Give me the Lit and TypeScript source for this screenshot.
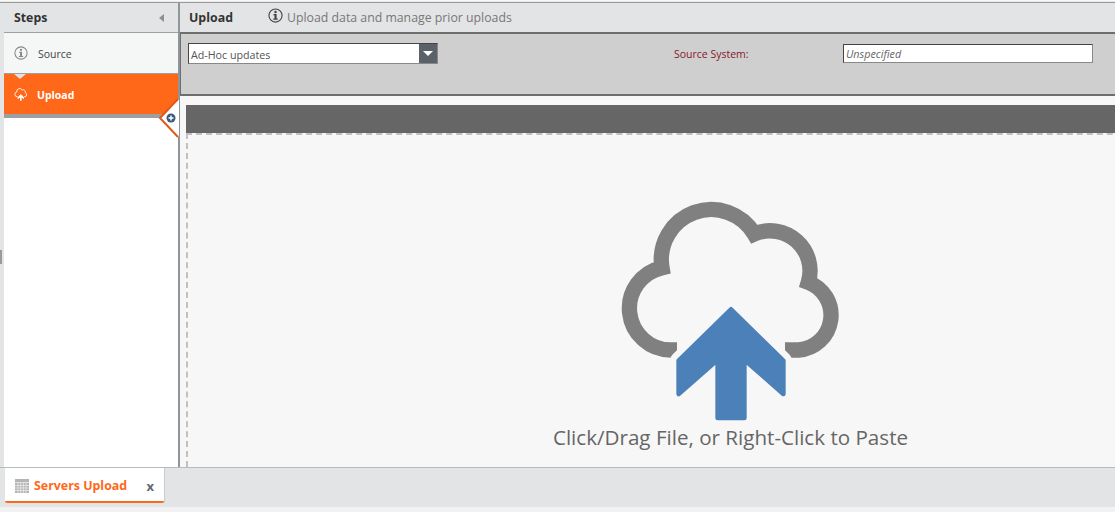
import { LitElement, html, css, svg } from "lit";
import { customElement } from "lit/decorators.js";

const cloudD = "M228 480H210A125 125 0 0 1 183 233A150 150 0 0 1 460 132A120 120 0 0 1 622 277A105 105 0 0 1 593 480H552";
const arrowD = "M390 358L547 512V612L430 509V684H350V509L233 612V512Z";

const infoIcon = (size: number, color: string) => html`<svg class="info" width=${size} height=${size} viewBox="0 0 16 16">
  <circle cx="8" cy="8" r="7" fill="none" stroke=${color} stroke-width="1.2"></circle>
  <circle cx="8" cy="4.3" r="1.3" fill=${color}></circle>
  <path d="M5.8 6.5H9.2V11.3H10.4V12.5H5.6V11.3H6.9V7.7H5.8Z" fill=${color}></path>
</svg>`;

@customElement("app-root")
export class AppRoot extends LitElement {
  static styles = css`
    :host { display: block; width: 1115px; height: 512px; overflow: hidden; background: #f2f2f2; font-family: "Open Sans", "Noto Sans", sans-serif; color: #333; }
    .page { height: 512px; display: flex; flex-direction: column; }
    .topline { height: 3px; flex: none; background: linear-gradient(#fafafa 0 1px, #e8e8e8 1px 2px, #9a9a9a 2px); }
    .body { height: 464px; flex: none; display: flex; background: #e3e4e6; position: relative; }
    .handle { position: absolute; left: 0; top: 247px; width: 2px; height: 14px; background: #9a9a9a; }
    .side { width: 176px; box-sizing: border-box; margin-left: 4px; flex: none; border-right: 2px solid #8f9598; background: #fff; display: flex; flex-direction: column; position: relative; }
    .side-head { height: 29px; flex: none; background: #e3e4e6; border-bottom: 1px solid #9aa0a3; display: flex; align-items: center; justify-content: space-between; padding: 0 14px 0 10px; font-size: 12.3px; font-weight: 700; color: #333; box-sizing: content-box; }
    .collapse { width: 0; height: 0; border-top: 4px solid transparent; border-bottom: 4px solid transparent; border-right: 5px solid #8a9094; }
    .step { height: 40px; flex: none; display: flex; align-items: center; padding-left: 10px; font-size: 10.5px; }
    .step span { margin-top: 2px; }
    .step.source { gap: 10px; background: #f4f7f6; color: #444; border-bottom: 1px solid #9aa0a3; position: relative; z-index: 1; }
    .step.source::after { content: ""; position: absolute; left: 10px; bottom: -6px; width: 0; height: 0; border-left: 6px solid transparent; border-right: 6px solid transparent; border-top: 5px solid #dfe3e3; }
    .step.upload { gap: 9px; background: #ff6719; color: #fff; font-weight: 700; }
    .step.upload svg { display: block; }
    .info { display: block; flex: none; }
    .rule { height: 4px; flex: none; background: #9ba0a3; }
    .flag { position: absolute; right: -1px; top: 94px; display: block; }
    .main { flex: 1; min-width: 0; overflow: hidden; display: flex; flex-direction: column; background: #f7f7f7; }
    .main-head { height: 29px; flex: none; display: flex; align-items: center; background: #e3e4e6; padding-left: 9px; font-size: 12.4px; }
    .main-head b { width: 79px; color: #333; }
    .main-head .info { margin-right: 4px; margin-top: -5px; }
    .desc { font-size: 12.3px; color: #777; }
    .panel { height: 64px; flex: none; box-sizing: border-box; background: #cfcfcf; border: solid #6e6e6e; border-width: 2px 0 2px 1px; display: flex; align-items: flex-start; padding-top: 9px; }
    .select { margin-left: 7px; width: 250px; height: 21px; flex: none; display: flex; background: #fff; border: 1px solid; border-color: #444 #888 #888 #444; box-sizing: border-box; font-size: 10.7px; color: #555; }
    .select span { flex: 1; padding: 3px 0 0 2px; line-height: 16px; }
    .select i { width: 18px; background: #5b6169; display: flex; align-items: center; justify-content: center; }
    .select i::after { content: ""; border-left: 5px solid transparent; border-right: 5px solid transparent; border-top: 5px solid #fff; }
    .label { margin-left: 236px; width: 169px; flex: none; font-size: 10.5px; color: #86182c; line-height: 22px; }
    .input { width: 250px; height: 19px; margin-top: 1px; flex: none; box-sizing: border-box; background: #fff; border: 1px solid; border-color: #444 #888 #888 #444; font-size: 10.8px; font-style: italic; color: #666; padding-left: 2px; line-height: 17px; }
    .content { margin: 9px 0 0 6px; width: 1087px; flex: 1; min-height: 0; display: flex; flex-direction: column; }
    .bar { height: 28px; flex: none; background: #666; }
    .drop { flex: 1; min-height: 0; overflow: hidden; box-sizing: border-box; border: dashed #c6bfc0; border-width: 2px 0 0 2px; display: flex; flex-direction: column; align-items: center; padding-top: 55px; }
    .drop svg { display: block; flex: none; }
    .drop p { margin: 1px 0 0; font-size: 20.6px; line-height: 28px; color: #666; white-space: nowrap; }
    .tabs { height: 40px; flex: none; background: #e3e4e6; border-top: 1px solid #b8bbbd; box-sizing: border-box; padding-left: 5px; }
    .tab { width: 159px; height: 35px; box-sizing: border-box; background: #fff; border-bottom: 2px solid #ff6719; border-radius: 0 0 2px 2px; box-shadow: 1px 0 0 #c9cbcd; display: flex; align-items: center; padding: 2px 10px 0; font-size: 12.4px; font-weight: 700; color: #ff6719; }
    .tab svg { flex: none; margin-right: 5px; display: block; }
    .tab span { flex: 1; }
    .tab em { font-style: normal; color: #5f6870; font-size: 13px; }
  `;

  render() {
    return html`<div class="page">
      <div class="topline"></div>
      <div class="body">
        <div class="handle"></div>
        <aside class="side">
          <div class="side-head"><span>Steps</span><i class="collapse"></i></div>
          <div class="step source">${infoIcon(14, "#888")}<span>Source</span></div>
          <div class="step upload">
            <svg width="14" height="15" viewBox="40 20 720 690">
              <path d=${cloudD} fill="none" stroke="#fff" stroke-width="46"></path>
              <path d=${arrowD} fill="#fff" stroke="#ff6719" stroke-width="40" stroke-linejoin="round"></path>
              <path d=${arrowD} fill="#fff"></path>
            </svg>
            <span>Upload</span>
          </div>
          <div class="rule"></div>
          <svg class="flag" width="22" height="42" viewBox="0 0 22 42">
            <path d="M22 2L3 21L22 40Z" fill="#fff"></path>
            <path d="M21 2L3 21L21 40" fill="none" stroke="#e0591a" stroke-width="2"></path>
            <circle cx="14" cy="21" r="4.5" fill="#3c5a80"></circle>
            <path d="M11.5 21H16.5M14 18.5V23.5" stroke="#fff" stroke-width="1.4"></path>
          </svg>
        </aside>
        <main class="main">
          <div class="main-head"><b>Upload</b>${infoIcon(15, "#444")}<span class="desc">Upload data and manage prior uploads</span></div>
          <div class="panel">
            <div class="select"><span>Ad-Hoc updates</span><i></i></div>
            <div class="label">Source System:</div>
            <div class="input">Unspecified</div>
          </div>
          <div class="content">
            <div class="bar"></div>
            <div class="drop">
              <svg width="260" height="232" viewBox="0 0 780 696">
                ${svg`<path d=${cloudD} fill="none" stroke="#808080" stroke-width="46"></path>
                <path d=${arrowD} fill="#f7f7f7" stroke="#f7f7f7" stroke-width="52" stroke-linejoin="round"></path>
                <path d=${arrowD} fill="#4c80b8" stroke="#4c80b8" stroke-width="14" stroke-linejoin="round"></path>`}
              </svg>
              <p>Click/Drag File, or Right-Click to Paste</p>
            </div>
          </div>
        </main>
      </div>
      <div class="tabs">
        <div class="tab">
          <svg width="14" height="14" viewBox="0 0 14 14">
            <rect width="14" height="14" fill="#b5b5b5"></rect>
            <path d="M0 3.5H14M0 6.5H14M0 9H14M0 11.5H14M3 3V14M5.7 3V14M8.4 3V14M11 3V14" stroke="#e9e9e9" stroke-width="0.8"></path>
          </svg>
          <span>Servers Upload</span><em>x</em>
        </div>
      </div>
    </div>`;
  }
}
